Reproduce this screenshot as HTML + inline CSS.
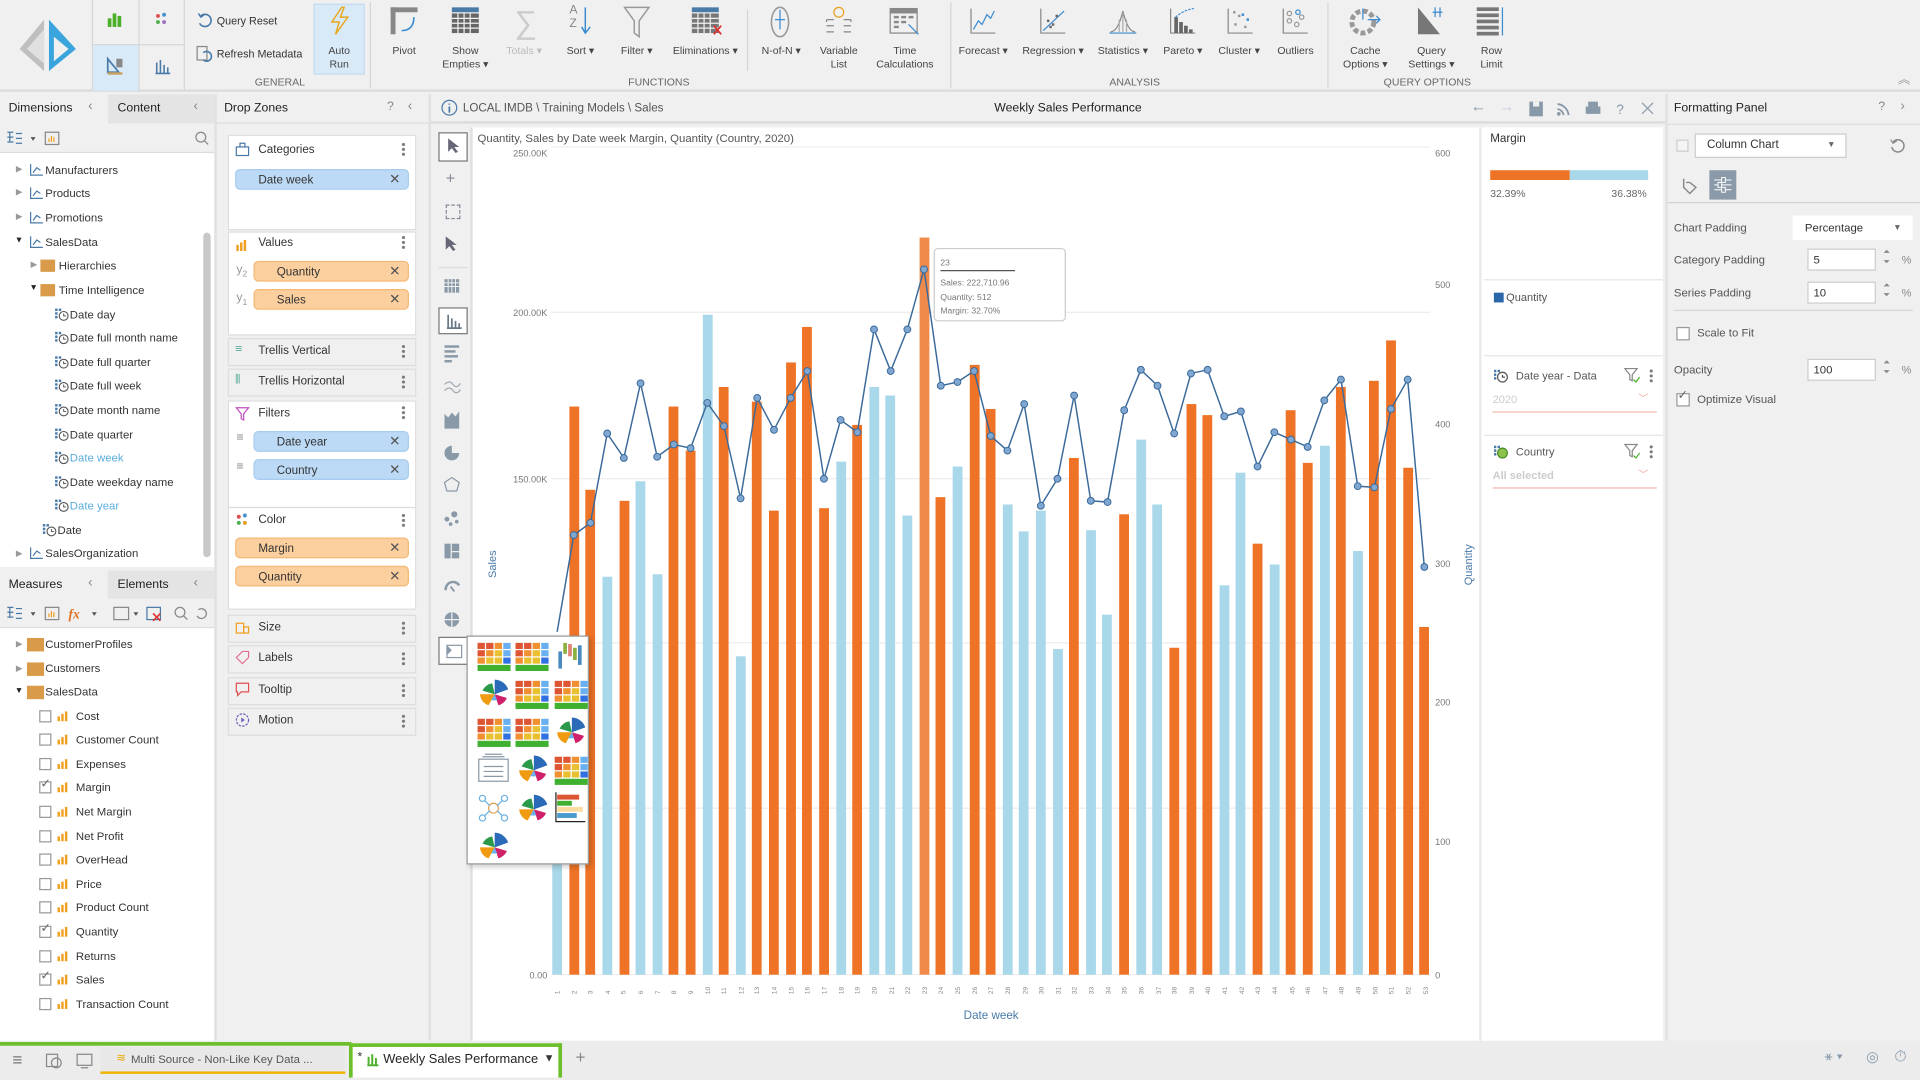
<!DOCTYPE html>
<html><head><meta charset="utf-8">
<style>
*{box-sizing:border-box;margin:0;padding:0}
html,body{width:1920px;height:1080px;overflow:hidden;background:#f0f0f0}
body{font-family:"Liberation Sans",sans-serif;color:#333}
#w{position:absolute;left:0;top:0;width:1568px;height:882px;transform:scale(1.22449);transform-origin:0 0;background:#f0f0f0;font-size:9.5px}
.a{position:absolute}
.t{position:absolute;white-space:nowrap}
.rl{position:absolute;text-align:center;font-size:8.6px;color:#444;line-height:11px;white-space:nowrap}
.gl{position:absolute;top:62px;font-size:8.6px;color:#666}
.sep{position:absolute;top:2px;width:1px;height:70px;background:#d6d6d6}
.ti{position:absolute;font-size:9.3px;color:#333;white-space:nowrap}
.box{position:absolute;left:186px;width:154px;background:#fff;border:1px solid #ddd}
.box.g{background:#f0f0f0}
.bh{position:absolute;left:24px;font-size:9.5px;color:#333}
.dots{position:absolute;right:9px;width:3px;height:12px;background:radial-gradient(circle,#777 1.2px,transparent 1.4px) 0 0/3px 4px}
.pill{position:absolute;height:17px;border-radius:4px;font-size:9.5px;line-height:17px;padding-left:18px;color:#333}
.pb{background:#bcd9f5;border:1px solid #a8ccef}
.po{background:#fbcf9e;border:1px solid #f5b877}
.pill .x{position:absolute;right:6px;top:0;color:#555;font-size:11px}
.cb{position:absolute;width:10px;height:10px;border:1px solid #999;background:#fff}
.mb{position:absolute;width:10px;height:9px}
.mb i{position:absolute;bottom:0;width:2px;background:#f0a020}
.lbl{position:absolute;font-size:9.3px;color:#555}
.inp{position:absolute;background:#fff;border:1px solid #ccc;font-size:9.3px;padding-left:4px;line-height:16px;color:#333}
.hi,.ck{position:absolute}
</style></head><body><div id="w">

<!-- RIBBON -->
<div class="a" style="left:0;top:0;width:1568px;height:75px;background:#f0f0f0;border-bottom:2px solid #dcdcdc"></div>
<svg class="a" style="left:10px;top:14px" width="56" height="46" viewBox="0 0 56 46">
<polygon points="26,2 26,44 6,26" fill="#bfbfbf"/><polygon points="12,26 26,10 26,38" fill="#e0e0e0"/>
<polygon points="30,2 52,26 30,44" fill="#3aa5dc"/><polygon points="34,16 46,26 34,36" fill="#f0f0f0"/></svg>
<div class="a" style="left:75px;top:0;width:1px;height:74px;background:#d6d6d6"></div>
<div class="a" style="left:76px;top:37px;width:37px;height:37px;background:#d8e9f8"></div>
<div class="a" style="left:113px;top:0;width:1px;height:74px;background:#d6d6d6"></div>
<div class="a" style="left:76px;top:36px;width:74px;height:1px;background:#d6d6d6"></div>
<svg class="a" style="left:87px;top:9px" width="14" height="14"><rect x="1" y="6" width="3" height="7" fill="#4caf2a"/><rect x="5" y="2" width="3" height="11" fill="#4caf2a"/><rect x="9" y="4" width="3" height="9" fill="#4caf2a"/></svg>
<svg class="a" style="left:126px;top:10px" width="12" height="12"><circle cx="3" cy="3" r="1.6" fill="#e05050"/><circle cx="8" cy="2" r="1.6" fill="#4a90d0"/><circle cx="3" cy="8" r="1.6" fill="#50b050"/><circle cx="8" cy="8" r="1.6" fill="#a070c0"/></svg>
<svg class="a" style="left:87px;top:46px" width="14" height="16"><path d="M1 13 L1 2 L10 13 Z" fill="none" stroke="#4a7aa8" stroke-width="1.4"/><rect x="1" y="13" width="12" height="2" fill="#c8a060"/><rect x="8" y="2" width="5" height="7" fill="#888"/></svg>
<svg class="a" style="left:126px;top:47px" width="14" height="14"><path d="M2 13V4M5 13V2M8 13V6M11 13V8M1 13H13" stroke="#4a7aa8" stroke-width="1.3"/></svg>
<div class="a" style="left:150px;top:0;width:1px;height:74px;background:#d6d6d6"></div>
<svg class="a" style="left:160px;top:10px" width="14" height="14"><path d="M4 3 A5 5 0 1 1 3 9" fill="none" stroke="#4a7aa8" stroke-width="1.3"/><path d="M2 1 L4 4 L7 2" fill="none" stroke="#4a7aa8" stroke-width="1.2"/></svg>
<div class="t" style="left:177px;top:12px;font-size:8.8px;color:#333">Query Reset</div>
<svg class="a" style="left:160px;top:37px" width="14" height="14"><rect x="1" y="1" width="8" height="11" fill="none" stroke="#888"/><path d="M6 6 A4 4 0 1 1 6 12" fill="none" stroke="#4a7aa8" stroke-width="1.3"/></svg>
<div class="t" style="left:177px;top:39px;font-size:8.8px;color:#333">Refresh Metadata</div>
<div class="a" style="left:256px;top:3px;width:42px;height:58px;background:#d8e9f8;border:1px solid #c4dcf0"></div>
<svg class="a" style="left:267px;top:5px" width="20" height="24"><path d="M12 1 L4 13 L10 13 L7 23 L17 9 L11 9 L14 1 Z" fill="none" stroke="#e8a820" stroke-width="1.2"/></svg>
<div class="rl" style="left:256px;top:36px;width:42px">Auto<br>Run</div>
<div class="gl" style="left:208px">GENERAL</div>
<div class="sep" style="left:302px"></div>
<svg class="a" style="left:318px;top:5px" width="24" height="26"><rect x="1" y="1" width="4" height="22" fill="#888"/><rect x="1" y="1" width="22" height="4" fill="#888"/><path d="M10 20 Q20 20 20 9" fill="none" stroke="#3a8ad0" stroke-width="1.3"/></svg>
<div class="rl" style="left:310px;top:36px;width:40px">Pivot</div>
<svg class="a" style="left:368px;top:5px" width="24" height="24"><g fill="#666"><rect x="1" y="1" width="22" height="4" fill="#4a7aa8"/><rect x="1" y="6" width="22" height="16"/></g><path d="M1 10H23M1 14H23M1 18H23M6 6V22M11 6V22M16 6V22" stroke="#f0f0f0"/></svg>
<div class="rl" style="left:355px;top:36px;width:50px">Show<br>Empties ▾</div>
<div class="t" style="left:420px;top:3px;font-size:26px;color:#ccc">∑</div>
<div class="rl" style="left:408px;top:36px;width:40px;color:#bbb">Totals ▾</div>
<div class="t" style="left:465px;top:3px;font-size:10px;color:#888;line-height:11px">A<br>Z</div>
<svg class="a" style="left:474px;top:5px" width="10" height="24"><path d="M4 1V21M1 17L4 22L8 17" fill="none" stroke="#3a8ad0" stroke-width="1.2"/></svg>
<div class="rl" style="left:454px;top:36px;width:40px">Sort ▾</div>
<svg class="a" style="left:509px;top:5px" width="22" height="26"><path d="M1 1H21L13 12V25L9 22V12Z" fill="none" stroke="#999" stroke-width="1.2"/></svg>
<div class="rl" style="left:500px;top:36px;width:40px">Filter ▾</div>
<svg class="a" style="left:564px;top:5px" width="26" height="24"><rect x="1" y="1" width="22" height="4" fill="#4a7aa8"/><rect x="1" y="6" width="22" height="16" fill="#777"/><path d="M1 10H23M1 14H23M1 18H23M6 6V22M11 6V22M16 6V22" stroke="#f0f0f0"/><path d="M19 16L25 23M25 16L19 23" stroke="#e03030" stroke-width="1.4"/></svg>
<div class="rl" style="left:546px;top:36px;width:60px">Eliminations ▾</div>
<div class="a" style="left:610px;top:8px;width:1px;height:50px;background:#d6d6d6"></div>
<svg class="a" style="left:627px;top:4px" width="20" height="28"><ellipse cx="10" cy="14" rx="7" ry="12" fill="none" stroke="#999" stroke-width="1.3"/><path d="M10 4V20M6 12H14" stroke="#3a8ad0"/></svg>
<div class="rl" style="left:615px;top:36px;width:46px">N-of-N ▾</div>
<svg class="a" style="left:673px;top:4px" width="24" height="26"><circle cx="12" cy="6" r="4" fill="none" stroke="#e8a020"/><path d="M2 12H8M16 12H22M2 17H8M16 17H22M2 22H8M16 22H22M2 12V14M22 12V14" stroke="#888"/></svg>
<div class="rl" style="left:665px;top:36px;width:40px">Variable<br>List</div>
<svg class="a" style="left:726px;top:4px" width="26" height="26"><rect x="1" y="3" width="22" height="20" fill="none" stroke="#888"/><rect x="1" y="3" width="22" height="4" fill="#888"/><path d="M4 10H8M10 10H14M16 10H20M4 14H8M10 14H14M4 18H8" stroke="#888" stroke-width="2"/><path d="M16 16L24 24" stroke="#3a8ad0"/></svg>
<div class="rl" style="left:709px;top:36px;width:60px">Time<br>Calculations</div>
<div class="gl" style="left:513px">FUNCTIONS</div>
<div class="sep" style="left:776px"></div>
<svg class="a" style="left:792px;top:6px" width="22" height="22"><path d="M1 1V21H21" stroke="#888" fill="none"/><path d="M3 18L7 11L10 14L14 6L17 9L20 3" stroke="#3a8ad0" fill="none"/></svg>
<div class="rl" style="left:778px;top:36px;width:50px">Forecast ▾</div>
<svg class="a" style="left:849px;top:6px" width="22" height="22"><path d="M1 1V21H21" stroke="#888" fill="none"/><path d="M3 19L20 3" stroke="#3a8ad0"/><g fill="#666"><rect x="6" y="10" width="2" height="2"/><rect x="10" y="13" width="2" height="2"/><rect x="13" y="6" width="2" height="2"/><rect x="8" y="15" width="2" height="2"/></g></svg>
<div class="rl" style="left:832px;top:36px;width:56px">Regression ▾</div>
<svg class="a" style="left:905px;top:6px" width="24" height="22"><path d="M1 21H23" stroke="#3a8ad0"/><path d="M2 20Q8 20 12 3Q16 20 22 20" fill="none" stroke="#888"/><path d="M9 20V10M12 20V4M15 20V10" stroke="#aaa"/></svg>
<div class="rl" style="left:891px;top:36px;width:52px">Statistics ▾</div>
<svg class="a" style="left:955px;top:6px" width="22" height="22"><path d="M1 1V21H21" stroke="#888" fill="none"/><g fill="#666"><rect x="4" y="8" width="3" height="13"/><rect x="8" y="12" width="3" height="9"/><rect x="12" y="15" width="3" height="6"/><rect x="16" y="18" width="3" height="3"/></g><path d="M5 8Q12 2 20 1" stroke="#3a8ad0" stroke-dasharray="2 1" fill="none"/></svg>
<div class="rl" style="left:943px;top:36px;width:46px">Pareto ▾</div>
<svg class="a" style="left:1002px;top:6px" width="22" height="22"><path d="M1 1V21H21" stroke="#888" fill="none"/><g fill="#999"><rect x="5" y="3" width="2" height="2"/><rect x="9" y="6" width="2" height="2"/><rect x="6" y="13" width="2" height="2"/><rect x="14" y="15" width="2" height="2"/></g><g fill="#3a8ad0"><rect x="12" y="5" width="2" height="2"/><rect x="16" y="9" width="2" height="2"/></g></svg>
<div class="rl" style="left:990px;top:36px;width:44px">Cluster ▾</div>
<svg class="a" style="left:1047px;top:6px" width="22" height="22"><path d="M1 1V21H21" stroke="#888" fill="none"/><g fill="none" stroke="#999"><circle cx="6" cy="5" r="1.8"/><circle cx="6" cy="11" r="1.8"/><circle cx="12" cy="14" r="1.8"/><circle cx="16" cy="8" r="1.8"/></g><circle cx="13" cy="4" r="1.8" fill="none" stroke="#3a8ad0"/></svg>
<div class="rl" style="left:1038px;top:36px;width:40px">Outliers</div>
<div class="gl" style="left:906px">ANALYSIS</div>
<div class="sep" style="left:1084px"></div>
<svg class="a" style="left:1100px;top:4px" width="28" height="26"><circle cx="13" cy="14" r="9" fill="none" stroke="#999" stroke-width="4" stroke-dasharray="4 2"/><path d="M13 3V12M17 12H27M24 9L27 12L24 15" stroke="#3a8ad0" fill="none"/></svg>
<div class="rl" style="left:1090px;top:36px;width:50px">Cache<br>Options ▾</div>
<svg class="a" style="left:1156px;top:4px" width="24" height="26"><path d="M2 2L2 24L20 24Z" fill="#777"/><path d="M16 2V10M20 2V10M14 6H22" stroke="#3a8ad0"/></svg>
<div class="rl" style="left:1142px;top:36px;width:54px">Query<br>Settings ▾</div>
<svg class="a" style="left:1205px;top:4px" width="24" height="26"><g fill="#777"><rect x="1" y="2" width="18" height="3"/><rect x="1" y="7" width="18" height="3"/><rect x="1" y="12" width="18" height="3"/><rect x="1" y="17" width="18" height="3"/><rect x="1" y="22" width="18" height="3"/></g><path d="M22 2V25" stroke="#3a8ad0"/></svg>
<div class="rl" style="left:1198px;top:36px;width:40px">Row<br>Limit</div>
<div class="gl" style="left:1130px">QUERY OPTIONS</div>
<div class="t" style="left:1550px;top:56px;font-size:10px;color:#999">︽</div>

<!-- LEFT PANEL -->
<div class="a" style="left:0;top:77px;width:175px;height:773px;background:#fff"></div>
<div class="a" style="left:0;top:77px;width:88px;height:24px;background:#f0f0f0"></div>
<div class="a" style="left:88px;top:77px;width:87px;height:24px;background:#e4e4e4"></div>
<div class="t" style="left:7px;top:83px;font-size:10px;color:#222">Dimensions</div>
<div class="t" style="left:72px;top:81px;font-size:11px;color:#888">‹</div>
<div class="t" style="left:96px;top:83px;font-size:10px;color:#222">Content</div>
<div class="t" style="left:158px;top:81px;font-size:11px;color:#888">‹</div>
<div class="a" style="left:0;top:101px;width:175px;height:24px;background:#f0f0f0;border-bottom:1px solid #ddd"></div>
<svg class="a" style="left:5px;top:106px" width="50" height="14"><path d="M1 2H6M1 6H6M1 10H6M3 2V10M8 3H13M8 7H13M8 11H13" stroke="#4a7aa8"/><path d="M20 6L22 9L24 6Z" fill="#555"/><rect x="32" y="2" width="11" height="10" fill="none" stroke="#888"/><path d="M35 10V7M37 10V5M39 10V6" stroke="#f0a020"/></svg>
<svg class="a" style="left:159px;top:107px" width="12" height="12"><circle cx="5" cy="5" r="4" fill="none" stroke="#888"/><path d="M8 8L11 11" stroke="#888"/></svg>
<div class="a" style="left:166px;top:190px;width:6px;height:265px;background:#c8c8c8;border-radius:3px"></div>

<div class="a" style="left:0;top:463px;width:175px;height:26px;background:#f0f0f0"></div>
<div class="a" style="left:88px;top:466px;width:87px;height:23px;background:#e4e4e4"></div>
<div class="t" style="left:7px;top:472px;font-size:10px;color:#222">Measures</div>
<div class="t" style="left:72px;top:470px;font-size:11px;color:#888">‹</div>
<div class="t" style="left:96px;top:472px;font-size:10px;color:#222">Elements</div>
<div class="t" style="left:158px;top:470px;font-size:11px;color:#888">‹</div>
<div class="a" style="left:0;top:489px;width:175px;height:24px;background:#f0f0f0;border-bottom:1px solid #ddd"></div>
<svg class="a" style="left:5px;top:494px" width="170" height="14"><path d="M1 2H6M1 6H6M1 10H6M3 2V10M8 3H13M8 7H13M8 11H13" stroke="#4a7aa8"/><path d="M20 6L22 9L24 6Z" fill="#555"/><rect x="32" y="2" width="11" height="10" fill="none" stroke="#888"/><path d="M35 10V7M37 10V5M39 10V6" stroke="#f0a020"/><text x="51" y="11" font-size="11" font-style="italic" font-weight="bold" fill="#e07020" font-family="Liberation Serif">fx</text><path d="M70 6L72 9L74 6Z" fill="#555"/><rect x="88" y="2" width="12" height="10" fill="none" stroke="#888"/><path d="M104 6L106 9L108 6Z" fill="#555"/><rect x="115" y="2" width="11" height="10" fill="none" stroke="#4a7aa8"/><path d="M120 7L126 13M126 7L120 13" stroke="#e03030" stroke-width="1.3"/><circle cx="142" cy="6" r="4" fill="none" stroke="#888"/><path d="M145 9L148 12" stroke="#888"/><path d="M157 4A4 4 0 1 1 156 9" fill="none" stroke="#888"/></svg>

<!-- DROP ZONES -->
<div class="a" style="left:175px;top:77px;width:2px;height:773px;background:#e0e0e0"></div>
<div class="t" style="left:183px;top:83px;font-size:10px;color:#222">Drop Zones</div>
<div class="t" style="left:316px;top:82px;font-size:10px;color:#888">?</div>
<div class="t" style="left:333px;top:81px;font-size:11px;color:#888">‹</div>
<div class="a" style="left:177px;top:100px;width:173px;height:1px;background:#ddd"></div>

<div class="box" style="top:110px;height:78px"></div>
<svg class="a" style="left:192px;top:116px" width="12" height="12"><rect x="1" y="4" width="10" height="7" fill="none" stroke="#4a7aa8"/><path d="M4 4V1H8V4" fill="none" stroke="#4a7aa8"/></svg>
<div class="bh" style="left:211px;top:117px">Categories</div><div class="dots" style="left:328px;top:116px"></div>
<div class="pill pb" style="left:192px;top:138px;width:142px">Date week<span class="x">✕</span></div>

<div class="box" style="top:189px;height:85px"></div>
<svg class="a" style="left:192px;top:194px" width="12" height="12"><path d="M2 11V6M5 11V4M8 11V2" stroke="#f0a020" stroke-width="2"/></svg>
<div class="bh" style="left:211px;top:193px">Values</div><div class="dots" style="left:328px;top:192px"></div>
<div class="t" style="left:193px;top:215px;font-size:10px;color:#999">y<sub style="font-size:7px">2</sub></div>
<div class="pill po" style="left:207px;top:213px;width:127px">Quantity<span class="x">✕</span></div>
<div class="t" style="left:193px;top:238px;font-size:10px;color:#999">y<sub style="font-size:7px">1</sub></div>
<div class="pill po" style="left:207px;top:236px;width:127px">Sales<span class="x">✕</span></div>

<div class="box g" style="top:276px;height:23px"></div>
<div class="t" style="left:192px;top:280px;font-size:10px;color:#5a9">≡</div>
<div class="bh" style="left:211px;top:281px">Trellis Vertical</div><div class="dots" style="left:328px;top:281px"></div>
<div class="box g" style="top:301px;height:23px"></div>
<div class="t" style="left:192px;top:305px;font-size:10px;color:#5a9">⫴</div>
<div class="bh" style="left:211px;top:306px">Trellis Horizontal</div><div class="dots" style="left:328px;top:306px"></div>

<div class="box" style="top:327px;height:88px"></div>
<svg class="a" style="left:192px;top:332px" width="12" height="12"><path d="M1 1H11L7 6V11L5 10V6Z" fill="none" stroke="#c050c0"/></svg>
<div class="bh" style="left:211px;top:332px">Filters</div><div class="dots" style="left:328px;top:331px"></div>
<div class="t" style="left:193px;top:352px;font-size:10px;color:#888">≡</div>
<div class="pill pb" style="left:207px;top:352px;width:127px">Date year<span class="x">✕</span></div>
<div class="t" style="left:193px;top:376px;font-size:10px;color:#888">≡</div>
<div class="pill pb" style="left:207px;top:375px;width:127px">Country<span class="x">✕</span></div>

<div class="box" style="top:414px;height:84px"></div>
<svg class="a" style="left:192px;top:419px" width="12" height="12"><circle cx="3" cy="3" r="1.6" fill="#e05050"/><circle cx="8" cy="2" r="1.6" fill="#4a90d0"/><circle cx="3" cy="8" r="1.6" fill="#50b050"/><circle cx="8" cy="8" r="1.6" fill="#e0a020"/></svg>
<div class="bh" style="left:211px;top:419px">Color</div><div class="dots" style="left:328px;top:419px"></div>
<div class="pill po" style="left:192px;top:439px;width:142px">Margin<span class="x">✕</span></div>
<div class="pill po" style="left:192px;top:462px;width:142px">Quantity<span class="x">✕</span></div>

<div class="box g" style="top:502px;height:23px"></div>
<svg class="a" style="left:192px;top:506px" width="12" height="12"><rect x="1" y="3" width="6" height="8" fill="none" stroke="#f0a020"/><rect x="7" y="6" width="4" height="5" fill="none" stroke="#f0a020"/></svg>
<div class="bh" style="left:211px;top:507px">Size</div><div class="dots" style="left:328px;top:507px"></div>
<div class="box g" style="top:527px;height:23px"></div>
<svg class="a" style="left:192px;top:531px" width="12" height="12"><path d="M1 6L6 1H11V6L6 11Z" fill="none" stroke="#e07090"/></svg>
<div class="bh" style="left:211px;top:532px">Labels</div><div class="dots" style="left:328px;top:532px"></div>
<div class="box g" style="top:553px;height:23px"></div>
<svg class="a" style="left:192px;top:557px" width="12" height="12"><path d="M1 1H11V8H5L2 11V8H1Z" fill="none" stroke="#e05050"/></svg>
<div class="bh" style="left:211px;top:558px">Tooltip</div><div class="dots" style="left:328px;top:558px"></div>
<div class="box g" style="top:578px;height:23px"></div>
<svg class="a" style="left:192px;top:582px" width="12" height="12"><circle cx="6" cy="6" r="5" fill="none" stroke="#7060c0" stroke-dasharray="2 1"/><path d="M5 4L8 6L5 8Z" fill="#7060c0"/></svg>
<div class="bh" style="left:211px;top:583px">Motion</div><div class="dots" style="left:328px;top:583px"></div>

<div class="a" style="left:350px;top:77px;width:2px;height:773px;background:#e0e0e0"></div>

<!-- CHART AREA -->
<div class="a" style="left:352px;top:77px;width:1008px;height:24px;background:#f0f0f0;border-bottom:2px solid #dcdcdc"></div>
<svg class="a" style="left:360px;top:81px" width="14" height="14"><circle cx="7" cy="7" r="6" fill="none" stroke="#4a7aa8"/><path d="M7 6V11M7 3.5V4.5" stroke="#4a7aa8" stroke-width="1.4"/></svg>
<div class="t" style="left:378px;top:83px;font-size:9.5px;color:#555">LOCAL IMDB \ Training Models \ Sales</div>
<div class="t" style="left:812px;top:83px;font-size:10px;color:#222">Weekly Sales Performance</div>
<div class="t" style="left:1201px;top:79px;font-size:13px;color:#8899aa">←</div>
<div class="t" style="left:1224px;top:79px;font-size:13px;color:#ccd">→</div>
<svg class="a" style="left:1248px;top:82px" width="110" height="14"><rect x="1" y="1" width="11" height="12" fill="#8899aa"/><rect x="4" y="1" width="5" height="4" fill="#f0f0f0"/><path d="M24 3A10 10 0 0 1 33 12M24 7A6 6 0 0 1 29 12" fill="none" stroke="#8899aa" stroke-width="1.5"/><circle cx="25" cy="11" r="1.5" fill="#8899aa"/><rect x="47" y="5" width="12" height="6" fill="#8899aa"/><rect x="49" y="1" width="8" height="4" fill="#8899aa"/><text x="72" y="11" font-size="11" fill="#8899aa">?</text><path d="M93 2L102 11M102 2L93 11" stroke="#8899aa"/></svg>

<div class="a" style="left:354px;top:104px;width:30px;height:746px;background:#f0f0f0"></div>
<div class="a" style="left:384px;top:104px;width:2px;height:746px;background:#e0e0e0"></div>
<div class="a" style="left:358px;top:108px;width:24px;height:24px;border:1px solid #777;background:#fff"></div>
<svg class="a" style="left:364px;top:112px" width="12" height="14"><path d="M2 1V12L5 9L8 13L10 12L7 8H11Z" fill="#667"/></svg>
<div class="t" style="left:364px;top:138px;font-size:13px;color:#889">+</div>
<div class="a" style="left:364px;top:167px;width:12px;height:12px;border:1px dashed #889"></div>
<svg class="a" style="left:362px;top:192px" width="14" height="16"><path d="M2 1V12L5 9L8 13L10 12L7 8H11Z" fill="#667"/></svg>
<div class="a" style="left:358px;top:218px;width:24px;height:1px;background:#ddd"></div>
<svg class="a" style="left:362px;top:226px" width="18" height="320"><g fill="#8a99a8">
<rect x="1" y="2" width="12" height="11"/><path d="M4 2V13M7 2V13M10 2V13M1 5H13M1 8H13" stroke="#f0f0f0" stroke-width=".8"/>
<rect x="1" y="56" width="12" height="2"/><rect x="1" y="60" width="9" height="2"/><rect x="1" y="64" width="11" height="2"/><rect x="1" y="68" width="6" height="2"/>
<path d="M1 88Q5 84 8 88T14 87M1 93Q5 89 8 93T14 92" fill="none" stroke="#a0aab4"/>
<path d="M1 124V112L4 115L7 111L10 114L13 110V124Z"/>
<path d="M7 138A6 6 0 1 0 13 144H7Z"/>
<path d="M7 164L13 168L11 175H3L1 168Z" fill="none" stroke="#8a99a8"/>
<circle cx="3" cy="198" r="2"/><circle cx="9" cy="194" r="2.5"/><circle cx="6" cy="202" r="1.5"/><circle cx="11" cy="200" r="1.5"/>
<rect x="1" y="218" width="5" height="12"/><rect x="7" y="218" width="6" height="6"/><rect x="7" y="225" width="6" height="5"/>
<path d="M2 256A6 6 0 0 1 13 252" fill="none" stroke="#8a99a8" stroke-width="2"/><path d="M6 253L9 257" stroke="#8a99a8" stroke-width="1.5"/>
<circle cx="7" cy="280" r="6"/><path d="M1 280H13M7 274V286" stroke="#f0f0f0"/>
</g></svg>
<div class="a" style="left:358px;top:251px;width:24px;height:22px;border:1px solid #777;background:#fff"></div>
<svg class="a" style="left:364px;top:255px" width="14" height="14"><path d="M2 13V2M5 13V5M8 13V7M11 13V9M1 13H13" stroke="#6a7988" stroke-width="1.4"/></svg>

<!-- chart svg -->
<svg class="a" style="left:386px;top:104px" width="822" height="746" viewBox="386 104 822 746" font-family="Liberation Sans, sans-serif">
<rect x="386" y="104" width="822" height="746" fill="#fff"/>
<text x="390" y="116" font-size="9.3" fill="#555">Quantity, Sales by Date week Margin, Quantity (Country, 2020)</text>
<g stroke="#e8e8e8" stroke-width="0.8"><line x1="450" x2="1168" y1="120" y2="120"/><line x1="450" x2="1168" y1="255" y2="255"/><line x1="450" x2="1168" y1="391" y2="391"/><line x1="450" x2="1168" y1="525" y2="525"/><line x1="450" x2="1168" y1="660" y2="660"/><line x1="450" x2="1168" y1="796" y2="796"/></g>
<g font-size="7.5" fill="#777" text-anchor="end"><text x="447" y="128">250.00K</text><text x="447" y="258">200.00K</text><text x="447" y="394">150.00K</text><text x="447" y="799">0.00</text></g>
<g font-size="7.5" fill="#777"><text x="1172" y="128">600</text><text x="1172" y="235">500</text><text x="1172" y="349">400</text><text x="1172" y="463">300</text><text x="1172" y="576">200</text><text x="1172" y="690">100</text><text x="1172" y="799">0</text></g>
<text transform="translate(405,472) rotate(-90)" font-size="9" fill="#4a7aa8">Sales</text>
<text transform="translate(1202,478) rotate(-90)" font-size="9" fill="#4a7aa8">Quantity</text>
<text x="787" y="832" font-size="9.5" fill="#4a7aa8">Date week</text>
<g fill="#a9d8ea">
<rect x="451" y="560" width="8" height="236"/><rect x="492" y="471" width="8" height="325"/><rect x="519" y="393" width="8" height="403"/><rect x="533" y="469" width="8" height="327"/><rect x="574" y="257" width="8" height="539"/><rect x="601" y="536" width="8" height="260"/><rect x="683" y="377" width="8" height="419"/><rect x="710" y="316" width="8" height="480"/><rect x="723" y="323" width="8" height="473"/><rect x="737" y="421" width="8" height="375"/><rect x="778" y="381" width="8" height="415"/><rect x="819" y="412" width="8" height="384"/><rect x="832" y="434" width="8" height="362"/><rect x="846" y="417" width="8" height="379"/><rect x="860" y="530" width="8" height="266"/><rect x="887" y="433" width="8" height="363"/><rect x="900" y="502" width="8" height="294"/><rect x="928" y="359" width="8" height="437"/><rect x="941" y="412" width="8" height="384"/><rect x="996" y="478" width="8" height="318"/><rect x="1009" y="386" width="8" height="410"/><rect x="1037" y="461" width="8" height="335"/><rect x="1078" y="364" width="8" height="432"/><rect x="1105" y="450" width="8" height="346"/>
</g>
<g fill="#ee7326">
<rect x="465" y="332" width="8" height="464"/><rect x="478" y="400" width="8" height="396"/><rect x="506" y="409" width="8" height="387"/><rect x="546" y="332" width="8" height="464"/><rect x="560" y="368" width="8" height="428"/><rect x="587" y="316" width="8" height="480"/><rect x="614" y="328" width="8" height="468"/><rect x="628" y="417" width="8" height="379"/><rect x="642" y="296" width="8" height="500"/><rect x="655" y="267" width="8" height="529"/><rect x="669" y="415" width="8" height="381"/><rect x="696" y="347" width="8" height="449"/><rect x="764" y="406" width="8" height="390"/><rect x="792" y="298" width="8" height="498"/><rect x="805" y="334" width="8" height="462"/><rect x="873" y="374" width="8" height="422"/><rect x="914" y="420" width="8" height="376"/><rect x="955" y="529" width="8" height="267"/><rect x="969" y="330" width="8" height="466"/><rect x="982" y="339" width="8" height="457"/><rect x="1023" y="444" width="8" height="352"/><rect x="1050" y="335" width="8" height="461"/><rect x="1064" y="378" width="8" height="418"/><rect x="1091" y="316" width="8" height="480"/><rect x="1118" y="311" width="8" height="485"/><rect x="1132" y="278" width="8" height="518"/><rect x="1146" y="382" width="8" height="414"/><rect x="1159" y="512" width="8" height="284"/>
</g>
<rect x="751" y="194" width="8" height="602" fill="#f08a4b"/>
<polyline fill="none" stroke="#3b6a9a" stroke-width="1.2" points="455,516 468.6,437 482.2,427 495.9,354 509.5,374 523.1,313 536.7,373 550.3,363 564,366 577.6,329 591.2,348 604.8,407 618.4,325 632.1,351 645.7,325 659.3,303 672.9,391 686.5,343 700.2,353 713.8,269 727.4,303 741,269 754.6,220 768.3,315 781.9,312 795.5,303 809.1,356 822.7,368 836.4,330 850,413 863.6,391 877.2,323 890.8,409 904.5,410 918.1,335 931.7,302 945.3,315 958.9,354 972.6,305 986.2,302 999.8,340 1013.4,336 1027,381 1040.7,353 1054.3,359 1067.9,365 1081.5,327 1095.1,310 1108.8,397 1122.4,398 1136,334 1149.6,310 1163.2,463"/>
<g fill="#7fa7d2" stroke="#3b6a9a" stroke-width="0.8">
<circle cx="468.6" cy="437" r="2.8"/><circle cx="482.2" cy="427" r="2.8"/><circle cx="495.9" cy="354" r="2.8"/><circle cx="509.5" cy="374" r="2.8"/><circle cx="523.1" cy="313" r="2.8"/><circle cx="536.7" cy="373" r="2.8"/><circle cx="550.3" cy="363" r="2.8"/><circle cx="564" cy="366" r="2.8"/><circle cx="577.6" cy="329" r="2.8"/><circle cx="591.2" cy="348" r="2.8"/><circle cx="604.8" cy="407" r="2.8"/><circle cx="618.4" cy="325" r="2.8"/><circle cx="632.1" cy="351" r="2.8"/><circle cx="645.7" cy="325" r="2.8"/><circle cx="659.3" cy="303" r="2.8"/><circle cx="672.9" cy="391" r="2.8"/><circle cx="686.5" cy="343" r="2.8"/><circle cx="700.2" cy="353" r="2.8"/><circle cx="713.8" cy="269" r="2.8"/><circle cx="727.4" cy="303" r="2.8"/><circle cx="741" cy="269" r="2.8"/><circle cx="754.6" cy="220" r="2.8"/><circle cx="768.3" cy="315" r="2.8"/><circle cx="781.9" cy="312" r="2.8"/><circle cx="795.5" cy="303" r="2.8"/><circle cx="809.1" cy="356" r="2.8"/><circle cx="822.7" cy="368" r="2.8"/><circle cx="836.4" cy="330" r="2.8"/><circle cx="850" cy="413" r="2.8"/><circle cx="863.6" cy="391" r="2.8"/><circle cx="877.2" cy="323" r="2.8"/><circle cx="890.8" cy="409" r="2.8"/><circle cx="904.5" cy="410" r="2.8"/><circle cx="918.1" cy="335" r="2.8"/><circle cx="931.7" cy="302" r="2.8"/><circle cx="945.3" cy="315" r="2.8"/><circle cx="958.9" cy="354" r="2.8"/><circle cx="972.6" cy="305" r="2.8"/><circle cx="986.2" cy="302" r="2.8"/><circle cx="999.8" cy="340" r="2.8"/><circle cx="1013.4" cy="336" r="2.8"/><circle cx="1027" cy="381" r="2.8"/><circle cx="1040.7" cy="353" r="2.8"/><circle cx="1054.3" cy="359" r="2.8"/><circle cx="1067.9" cy="365" r="2.8"/><circle cx="1081.5" cy="327" r="2.8"/><circle cx="1095.1" cy="310" r="2.8"/><circle cx="1108.8" cy="397" r="2.8"/><circle cx="1122.4" cy="398" r="2.8"/><circle cx="1136" cy="334" r="2.8"/><circle cx="1149.6" cy="310" r="2.8"/><circle cx="1163.2" cy="463" r="2.8"/>
</g>
<g font-size="5.5" fill="#888">
<text transform="translate(457,812) rotate(-90)">1</text><text transform="translate(471,812) rotate(-90)">2</text><text transform="translate(484,812) rotate(-90)">3</text><text transform="translate(498,812) rotate(-90)">4</text><text transform="translate(511,812) rotate(-90)">5</text><text transform="translate(525,812) rotate(-90)">6</text><text transform="translate(539,812) rotate(-90)">7</text><text transform="translate(552,812) rotate(-90)">8</text><text transform="translate(566,812) rotate(-90)">9</text><text transform="translate(580,812) rotate(-90)">10</text><text transform="translate(593,812) rotate(-90)">11</text><text transform="translate(607,812) rotate(-90)">12</text><text transform="translate(620,812) rotate(-90)">13</text><text transform="translate(634,812) rotate(-90)">14</text><text transform="translate(648,812) rotate(-90)">15</text><text transform="translate(661,812) rotate(-90)">16</text><text transform="translate(675,812) rotate(-90)">17</text><text transform="translate(689,812) rotate(-90)">18</text><text transform="translate(702,812) rotate(-90)">19</text><text transform="translate(716,812) rotate(-90)">20</text><text transform="translate(730,812) rotate(-90)">21</text><text transform="translate(743,812) rotate(-90)">22</text><text transform="translate(757,812) rotate(-90)">23</text><text transform="translate(770,812) rotate(-90)">24</text><text transform="translate(784,812) rotate(-90)">25</text><text transform="translate(798,812) rotate(-90)">26</text><text transform="translate(811,812) rotate(-90)">27</text><text transform="translate(825,812) rotate(-90)">28</text><text transform="translate(839,812) rotate(-90)">29</text><text transform="translate(852,812) rotate(-90)">30</text><text transform="translate(866,812) rotate(-90)">31</text><text transform="translate(879,812) rotate(-90)">32</text><text transform="translate(893,812) rotate(-90)">33</text><text transform="translate(907,812) rotate(-90)">34</text><text transform="translate(920,812) rotate(-90)">35</text><text transform="translate(934,812) rotate(-90)">36</text><text transform="translate(948,812) rotate(-90)">37</text><text transform="translate(961,812) rotate(-90)">38</text><text transform="translate(975,812) rotate(-90)">39</text><text transform="translate(988,812) rotate(-90)">40</text><text transform="translate(1002,812) rotate(-90)">41</text><text transform="translate(1016,812) rotate(-90)">42</text><text transform="translate(1029,812) rotate(-90)">43</text><text transform="translate(1043,812) rotate(-90)">44</text><text transform="translate(1057,812) rotate(-90)">45</text><text transform="translate(1070,812) rotate(-90)">46</text><text transform="translate(1084,812) rotate(-90)">47</text><text transform="translate(1097,812) rotate(-90)">48</text><text transform="translate(1111,812) rotate(-90)">49</text><text transform="translate(1125,812) rotate(-90)">50</text><text transform="translate(1138,812) rotate(-90)">51</text><text transform="translate(1152,812) rotate(-90)">52</text><text transform="translate(1166,812) rotate(-90)">53</text>
</g>
<rect x="763" y="203" width="107" height="59" rx="3" fill="#fff" stroke="#ccc"/>
<text x="768" y="217" font-size="7" fill="#777">23</text><line x1="768" x2="829" y1="221" y2="221" stroke="#555"/>
<g font-size="7" fill="#777"><text x="768" y="233">Sales: 222,710.96</text><text x="768" y="245">Quantity: 512</text><text x="768" y="256">Margin: 32.70%</text></g>
</svg>

<!-- popup -->
<div class="a" style="left:358px;top:520px;width:24px;height:23px;border:1px solid #777;background:#fff"></div>
<svg class="a" style="left:364px;top:525px" width="14" height="14"><path d="M1 13V2L5 6L1 10" fill="#8a99a8"/><rect x="1" y="2" width="12" height="10" fill="none" stroke="#8a99a8"/></svg>
<div class="a" style="left:381px;top:519px;width:100px;height:187px;background:#fff;border:1px solid #999;box-shadow:2px 2px 4px rgba(0,0,0,.2)"></div>
<svg class="a" style="left:386px;top:522px" width="95" height="184" viewBox="0 0 95 184">
<defs>
<g id="hm"><rect x="0" y="0" width="6" height="5" fill="#dd5533"/><rect x="7" y="0" width="6" height="5" fill="#dd5533"/><rect x="14" y="0" width="6" height="5" fill="#f09030"/><rect x="21" y="0" width="6" height="5" fill="#6ab0f0"/><rect x="0" y="6" width="6" height="5" fill="#dd5533"/><rect x="7" y="6" width="6" height="5" fill="#f09030"/><rect x="14" y="6" width="6" height="5" fill="#e8c030"/><rect x="21" y="6" width="6" height="5" fill="#6ab0f0"/><rect x="0" y="12" width="6" height="5" fill="#f09030"/><rect x="7" y="12" width="6" height="5" fill="#e8c030"/><rect x="14" y="12" width="6" height="5" fill="#e8c030"/><rect x="21" y="12" width="6" height="5" fill="#3070e0"/><rect x="0" y="18" width="27" height="5" fill="#40b030"/></g>
<g id="pie"><path d="M15 12L15 0A12 12 0 0 1 26 8Z" fill="#2a6ab8"/><path d="M15 12L25 15A11 11 0 0 1 18 21Z" fill="#d0206a"/><path d="M15 12L10 21A10 10 0 0 1 3 12Z" fill="#f09a10"/><path d="M15 12L5 9A11 11 0 0 1 13 3Z" fill="#2a9a4a"/><path d="M15 12L17 17L12 17Z" fill="#6ab0f0"/></g>
</defs>
<use href="#hm" x="4" y="3"/><use href="#hm" x="35" y="3"/>
<g><rect x="70" y="10" width="3" height="14" fill="#4a8ac0"/><rect x="74" y="3" width="3" height="9" fill="#8ab040"/><rect x="78" y="4" width="3" height="10" fill="#e08070"/><rect x="82" y="7" width="3" height="10" fill="#8ab040"/><rect x="86" y="5" width="3" height="16" fill="#4a8ac0"/></g>
<use href="#pie" x="3" y="33"/><use href="#hm" x="35" y="34"/><use href="#hm" x="67" y="34"/>
<use href="#hm" x="4" y="65"/><use href="#hm" x="35" y="65"/><use href="#pie" x="66" y="64"/>
<g fill="none" stroke="#8a99a8"><rect x="5" y="98" width="24" height="18"/><path d="M8 96H26M10 94H24M9 104H25M9 108H25M9 112H25"/></g><use href="#pie" x="35" y="95"/><use href="#hm" x="67" y="96"/>
<g fill="none" stroke="#6ab0e0"><circle cx="17" cy="138" r="4" stroke="#e0a050"/><circle cx="8" cy="130" r="2.5"/><circle cx="26" cy="130" r="2.5"/><circle cx="8" cy="146" r="2.5"/><circle cx="26" cy="146" r="2.5"/><path d="M10 132L14 136M24 132L20 136M10 144L14 140M24 144L20 140"/></g><use href="#pie" x="35" y="127"/>
<g><path d="M68 125V149H92" stroke="#222" fill="none"/><rect x="69" y="127" width="18" height="4" fill="#dd5533"/><rect x="69" y="132" width="12" height="4" fill="#40b030"/><rect x="69" y="137" width="21" height="4" fill="#fbdca0"/><rect x="69" y="142" width="16" height="4" fill="#4a9ad0"/></g>
<use href="#pie" x="3" y="158"/>
</svg>

<!-- legend panel -->
<div class="a" style="left:1208px;top:104px;width:2px;height:746px;background:#eaeaea"></div>
<div class="a" style="left:1210px;top:104px;width:148px;height:746px;background:#fff"></div>
<div class="t" style="left:1217px;top:108px;font-size:9.5px;color:#333">Margin</div>
<div class="a" style="left:1217px;top:139px;width:65px;height:8px;background:#ee7326"></div>
<div class="a" style="left:1282px;top:139px;width:64px;height:8px;background:#a9d8ea"></div>
<div class="t" style="left:1217px;top:153px;font-size:8.5px;color:#666">32.39%</div>
<div class="t" style="left:1316px;top:153px;font-size:8.5px;color:#666">36.38%</div>
<div class="a" style="left:1212px;top:228px;width:146px;height:1px;background:#e6e6e6"></div>
<div class="a" style="left:1220px;top:239px;width:8px;height:8px;background:#2a66a8"></div>
<div class="t" style="left:1230px;top:238px;font-size:9px;color:#555">Quantity</div>
<div class="a" style="left:1212px;top:290px;width:146px;height:1px;background:#e6e6e6"></div>
<svg class="a" style="left:1220px;top:301px" width="12" height="12"><g fill="#4a7aa8"><rect x="0" y="1" width="2" height="2"/><rect x="3" y="1" width="2" height="2"/><rect x="0" y="4" width="2" height="2"/><rect x="0" y="7" width="2" height="2"/></g><circle cx="7" cy="7" r="4" fill="#fff" stroke="#555"/><path d="M7 5V7H9" stroke="#555" fill="none"/></svg>
<div class="t" style="left:1238px;top:302px;font-size:9px;color:#555">Date year - Data</div>
<svg class="a" style="left:1326px;top:300px" width="14" height="14"><path d="M1 1H11L7 6V11L5 10V6Z" fill="none" stroke="#888"/><path d="M8 10L10 12L13 8" stroke="#4caf2a" fill="none"/></svg>
<div class="dots" style="left:1347px;top:301px"></div>
<div class="t" style="left:1219px;top:321px;font-size:9px;color:#ccc">2020</div>
<div class="t" style="left:1338px;top:320px;font-size:8px;color:#f0a090">﹀</div>
<div class="a" style="left:1219px;top:336px;width:134px;height:1px;background:#f0b8a8"></div>
<div class="a" style="left:1212px;top:355px;width:146px;height:1px;background:#e6e6e6"></div>
<svg class="a" style="left:1220px;top:363px" width="12" height="12"><g fill="#4a7aa8"><rect x="0" y="1" width="2" height="2"/><rect x="3" y="1" width="2" height="2"/><rect x="0" y="4" width="2" height="2"/><rect x="0" y="7" width="2" height="2"/></g><circle cx="7" cy="7" r="4" fill="#8bc34a" stroke="#4a8a2a"/></svg>
<div class="t" style="left:1238px;top:364px;font-size:9px;color:#555">Country</div>
<svg class="a" style="left:1326px;top:362px" width="14" height="14"><path d="M1 1H11L7 6V11L5 10V6Z" fill="none" stroke="#888"/><path d="M8 10L10 12L13 8" stroke="#4caf2a" fill="none"/></svg>
<div class="dots" style="left:1347px;top:363px"></div>
<div class="t" style="left:1219px;top:383px;font-size:9px;color:#ccc;font-weight:bold">All selected</div>
<div class="t" style="left:1338px;top:382px;font-size:8px;color:#f0a090">﹀</div>
<div class="a" style="left:1219px;top:398px;width:134px;height:1px;background:#f0b8a8"></div>

<!-- formatting panel -->
<div class="a" style="left:1360px;top:77px;width:2px;height:773px;background:#e0e0e0"></div>
<div class="t" style="left:1367px;top:83px;font-size:10px;color:#222">Formatting Panel</div>
<div class="t" style="left:1534px;top:82px;font-size:10px;color:#888">?</div>
<div class="t" style="left:1552px;top:81px;font-size:11px;color:#888">›</div>
<div class="a" style="left:1362px;top:101px;width:206px;height:1px;background:#ddd"></div>
<div class="cb" style="left:1369px;top:114px;border-color:#ccc;background:#f4f4f4"></div>
<div class="inp" style="left:1384px;top:109px;width:124px;height:20px;line-height:18px;padding-left:9px;font-size:9.5px">Column Chart<span style="position:absolute;right:8px;top:0;font-size:7px;color:#666">▼</span></div>
<svg class="a" style="left:1543px;top:112px" width="14" height="14"><path d="M3 4A5 5 0 1 1 2 8" fill="none" stroke="#888" stroke-width="1.2"/><path d="M1 2L3 5L6 3" fill="none" stroke="#888"/></svg>
<svg class="a" style="left:1372px;top:144px" width="16" height="16"><path d="M3 2V9L8 14L13 9L8 5H5" fill="none" stroke="#888" stroke-width="1.2"/></svg>
<div class="a" style="left:1396px;top:139px;width:22px;height:24px;background:#8a9aa8"></div>
<svg class="a" style="left:1399px;top:143px" width="16" height="16"><path d="M1 4H15M1 8H15M1 12H15" stroke="#fff" stroke-width=".8"/><rect x="7" y="2" width="3" height="4" fill="#8a9aa8" stroke="#fff" stroke-width=".8"/><rect x="4" y="6" width="3" height="4" fill="#8a9aa8" stroke="#fff" stroke-width=".8"/><rect x="7" y="10" width="3" height="4" fill="#8a9aa8" stroke="#fff" stroke-width=".8"/></svg>
<div class="a" style="left:1362px;top:165px;width:206px;height:1px;background:#d0d0d0"></div>
<div class="lbl" style="left:1367px;top:181px">Chart Padding</div>
<div class="inp" style="left:1464px;top:176px;width:98px;height:20px;border-color:#fff;line-height:19px;padding-left:9px">Percentage<span style="position:absolute;right:8px;top:0;font-size:7px;color:#666">▼</span></div>
<div class="lbl" style="left:1367px;top:207px">Category Padding</div>
<div class="inp" style="left:1476px;top:203px;width:56px;height:18px">5</div>
<div class="t" style="left:1538px;top:203px;font-size:7px;color:#888;line-height:8px">⏶<br>⏷</div>
<div class="t" style="left:1553px;top:207px;font-size:9px;color:#888">%</div>
<div class="lbl" style="left:1367px;top:234px">Series Padding</div>
<div class="inp" style="left:1476px;top:230px;width:56px;height:18px">10</div>
<div class="t" style="left:1538px;top:230px;font-size:7px;color:#888;line-height:8px">⏶<br>⏷</div>
<div class="t" style="left:1553px;top:234px;font-size:9px;color:#888">%</div>
<div class="a" style="left:1367px;top:253px;width:195px;height:1px;background:#d6d6d6"></div>
<div class="cb" style="left:1369px;top:267px;width:11px;height:11px"></div>
<div class="lbl" style="left:1386px;top:267px">Scale to Fit</div>
<div class="lbl" style="left:1367px;top:297px">Opacity</div>
<div class="inp" style="left:1476px;top:293px;width:56px;height:18px">100</div>
<div class="t" style="left:1538px;top:293px;font-size:7px;color:#888;line-height:8px">⏶<br>⏷</div>
<div class="t" style="left:1553px;top:297px;font-size:9px;color:#888">%</div>
<div class="cb" style="left:1369px;top:321px;width:11px;height:11px"></div>
<div class="t" style="left:1370px;top:318px;font-size:10px;color:#666">✓</div>
<div class="lbl" style="left:1386px;top:321px">Optimize Visual</div>

<!-- BOTTOM BAR -->
<div class="a" style="left:0;top:850px;width:1568px;height:32px;background:#ececec"></div>
<div class="a" style="left:0;top:851px;width:287px;height:3px;background:#6cbf2a"></div>
<div class="a" style="left:285px;top:852px;width:174px;height:28px;background:#fff;border:3px solid #6cbf2a;border-bottom:none"></div>
<div class="t" style="left:10px;top:857px;font-size:14px;color:#777">≡</div>
<svg class="a" style="left:37px;top:859px" width="46" height="14"><rect x="1" y="2" width="9" height="10" fill="none" stroke="#888"/><circle cx="9" cy="9" r="4" fill="none" stroke="#888"/><rect x="26" y="2" width="12" height="9" fill="none" stroke="#888"/><path d="M29 13H35" stroke="#888"/></svg>
<div class="a" style="left:82px;top:855px;width:200px;height:22px;background:#e8e8e8;border-bottom:2px solid #f0b400"></div>
<div class="t" style="left:95px;top:859px;font-size:9.3px;color:#e8a800">≋</div>
<div class="t" style="left:107px;top:860px;font-size:9.3px;color:#555">Multi Source - Non-Like Key Data ...</div>
<div class="t" style="left:292px;top:858px;font-size:10px;color:#333">*</div>
<svg class="a" style="left:299px;top:859px" width="12" height="12"><path d="M2 11V4M5 11V2M8 11V5M1 11H10" stroke="#4caf2a" stroke-width="1.6"/></svg>
<div class="t" style="left:313px;top:859px;font-size:10.5px;color:#222">Weekly Sales Performance</div>
<div class="t" style="left:444px;top:859px;font-size:9px;color:#333">▼</div>
<div class="t" style="left:470px;top:855px;font-size:14px;color:#888">+</div>
<div class="t" style="left:1490px;top:857px;font-size:11px;color:#8899aa">⚹ ▾</div>
<div class="t" style="left:1524px;top:856px;font-size:12px;color:#8899aa">◎</div>
<div class="t" style="left:1547px;top:855px;font-size:13px;color:#8899aa">⏱</div>

<!-- dimension tree items -->
<svg class="a" style="left:0;top:128px" width="60" height="340">
<defs>
<g id="hi"><path d="M1 1V10H11" fill="none" stroke="#4a7aa8"/><path d="M3 8L6 4L9 6" fill="none" stroke="#4a7aa8"/></g>
<g id="ck"><g fill="#4a7aa8"><rect x="0" y="0" width="2" height="2"/><rect x="3" y="0" width="2" height="2"/><rect x="0" y="3" width="2" height="2"/><rect x="0" y="6" width="2" height="2"/></g><circle cx="7" cy="6" r="3.6" fill="#fff" stroke="#555" stroke-width=".9"/><path d="M7 4V6H9" stroke="#555" stroke-width=".8" fill="none"/></g>
</defs>
<use href="#hi" x="24" y="5"/><use href="#hi" x="24" y="24"/><use href="#hi" x="24" y="44"/><use href="#hi" x="24" y="64"/>
<use href="#ck" x="45" y="124"/><use href="#ck" x="45" y="143"/><use href="#ck" x="45" y="163"/><use href="#ck" x="45" y="182"/><use href="#ck" x="45" y="202"/><use href="#ck" x="45" y="222"/><use href="#ck" x="45" y="241"/><use href="#ck" x="45" y="261"/><use href="#ck" x="45" y="280"/><use href="#ck" x="35" y="300"/>
<use href="#hi" x="24" y="318"/>
</svg>
<div class="t" style="left:13px;top:134px;font-size:7px;color:#999">▶</div><div class="ti" style="left:37px;top:134px">Manufacturers</div>
<div class="t" style="left:13px;top:153px;font-size:7px;color:#999">▶</div><div class="ti" style="left:37px;top:153px">Products</div>
<div class="t" style="left:13px;top:173px;font-size:7px;color:#999">▶</div><div class="ti" style="left:37px;top:173px">Promotions</div>
<div class="t" style="left:12px;top:193px;font-size:7px;color:#222">▼</div><div class="ti" style="left:37px;top:193px">SalesData</div>
<div class="t" style="left:25px;top:212px;font-size:7px;color:#999">▶</div><div class="a" style="left:33px;top:212px;width:12px;height:10px;background:#d99a4a"></div><div class="ti" style="left:48px;top:212px">Hierarchies</div>
<div class="t" style="left:24px;top:232px;font-size:7px;color:#222">▼</div><div class="a" style="left:33px;top:232px;width:12px;height:10px;background:#d99a4a"></div><div class="ti" style="left:48px;top:232px">Time Intelligence</div>
<div class="ti" style="left:57px;top:252px">Date day</div>
<div class="ti" style="left:57px;top:271px">Date full month name</div>
<div class="ti" style="left:57px;top:291px">Date full quarter</div>
<div class="ti" style="left:57px;top:310px">Date full week</div>
<div class="ti" style="left:57px;top:330px">Date month name</div>
<div class="ti" style="left:57px;top:350px">Date quarter</div>
<div class="ti" style="left:57px;top:369px;color:#5aaede">Date week</div>
<div class="ti" style="left:57px;top:389px">Date weekday name</div>
<div class="ti" style="left:57px;top:408px;color:#5aaede">Date year</div>
<div class="ti" style="left:47px;top:428px">Date</div>
<div class="t" style="left:13px;top:448px;font-size:7px;color:#999">▶</div><div class="ti" style="left:37px;top:447px">SalesOrganization</div>

<!-- measures tree -->
<div class="t" style="left:13px;top:522px;font-size:7px;color:#999">▶</div><div class="a" style="left:22px;top:521px;width:14px;height:11px;background:#d99a4a"></div><div class="ti" style="left:37px;top:521px">CustomerProfiles</div>
<div class="t" style="left:13px;top:542px;font-size:7px;color:#999">▶</div><div class="a" style="left:22px;top:541px;width:14px;height:11px;background:#d99a4a"></div><div class="ti" style="left:37px;top:541px">Customers</div>
<div class="t" style="left:12px;top:561px;font-size:7px;color:#222">▼</div><div class="a" style="left:22px;top:560px;width:14px;height:11px;background:#d99a4a"></div><div class="ti" style="left:37px;top:560px">SalesData</div>

<div class="cb" style="left:32px;top:580px"></div><div class="mb" style="left:47px;top:580px"><i style="left:0;height:4px"></i><i style="left:3px;height:6px"></i><i style="left:6px;height:8px"></i></div><div class="ti" style="left:62px;top:580px">Cost</div>
<div class="cb" style="left:32px;top:599px"></div><div class="mb" style="left:47px;top:599px"><i style="left:0;height:4px"></i><i style="left:3px;height:6px"></i><i style="left:6px;height:8px"></i></div><div class="ti" style="left:62px;top:599px">Customer Count</div>
<div class="cb" style="left:32px;top:619px"></div><div class="mb" style="left:47px;top:619px"><i style="left:0;height:4px"></i><i style="left:3px;height:6px"></i><i style="left:6px;height:8px"></i></div><div class="ti" style="left:62px;top:619px">Expenses</div>
<div class="cb" style="left:32px;top:638px"></div><div class="t" style="left:33px;top:635px;font-size:10px;color:#666">✓</div><div class="mb" style="left:47px;top:638px"><i style="left:0;height:4px"></i><i style="left:3px;height:6px"></i><i style="left:6px;height:8px"></i></div><div class="ti" style="left:62px;top:638px">Margin</div>
<div class="cb" style="left:32px;top:658px"></div><div class="mb" style="left:47px;top:658px"><i style="left:0;height:4px"></i><i style="left:3px;height:6px"></i><i style="left:6px;height:8px"></i></div><div class="ti" style="left:62px;top:658px">Net Margin</div>
<div class="cb" style="left:32px;top:678px"></div><div class="mb" style="left:47px;top:678px"><i style="left:0;height:4px"></i><i style="left:3px;height:6px"></i><i style="left:6px;height:8px"></i></div><div class="ti" style="left:62px;top:678px">Net Profit</div>
<div class="cb" style="left:32px;top:697px"></div><div class="mb" style="left:47px;top:697px"><i style="left:0;height:4px"></i><i style="left:3px;height:6px"></i><i style="left:6px;height:8px"></i></div><div class="ti" style="left:62px;top:697px">OverHead</div>
<div class="cb" style="left:32px;top:717px"></div><div class="mb" style="left:47px;top:717px"><i style="left:0;height:4px"></i><i style="left:3px;height:6px"></i><i style="left:6px;height:8px"></i></div><div class="ti" style="left:62px;top:717px">Price</div>
<div class="cb" style="left:32px;top:736px"></div><div class="mb" style="left:47px;top:736px"><i style="left:0;height:4px"></i><i style="left:3px;height:6px"></i><i style="left:6px;height:8px"></i></div><div class="ti" style="left:62px;top:736px">Product Count</div>
<div class="cb" style="left:32px;top:756px"></div><div class="t" style="left:33px;top:753px;font-size:10px;color:#666">✓</div><div class="mb" style="left:47px;top:756px"><i style="left:0;height:4px"></i><i style="left:3px;height:6px"></i><i style="left:6px;height:8px"></i></div><div class="ti" style="left:62px;top:756px">Quantity</div>
<div class="cb" style="left:32px;top:776px"></div><div class="mb" style="left:47px;top:776px"><i style="left:0;height:4px"></i><i style="left:3px;height:6px"></i><i style="left:6px;height:8px"></i></div><div class="ti" style="left:62px;top:776px">Returns</div>
<div class="cb" style="left:32px;top:795px"></div><div class="t" style="left:33px;top:792px;font-size:10px;color:#666">✓</div><div class="mb" style="left:47px;top:795px"><i style="left:0;height:4px"></i><i style="left:3px;height:6px"></i><i style="left:6px;height:8px"></i></div><div class="ti" style="left:62px;top:795px">Sales</div>
<div class="cb" style="left:32px;top:815px"></div><div class="mb" style="left:47px;top:815px"><i style="left:0;height:4px"></i><i style="left:3px;height:6px"></i><i style="left:6px;height:8px"></i></div><div class="ti" style="left:62px;top:815px">Transaction Count</div>

</div></body></html>
